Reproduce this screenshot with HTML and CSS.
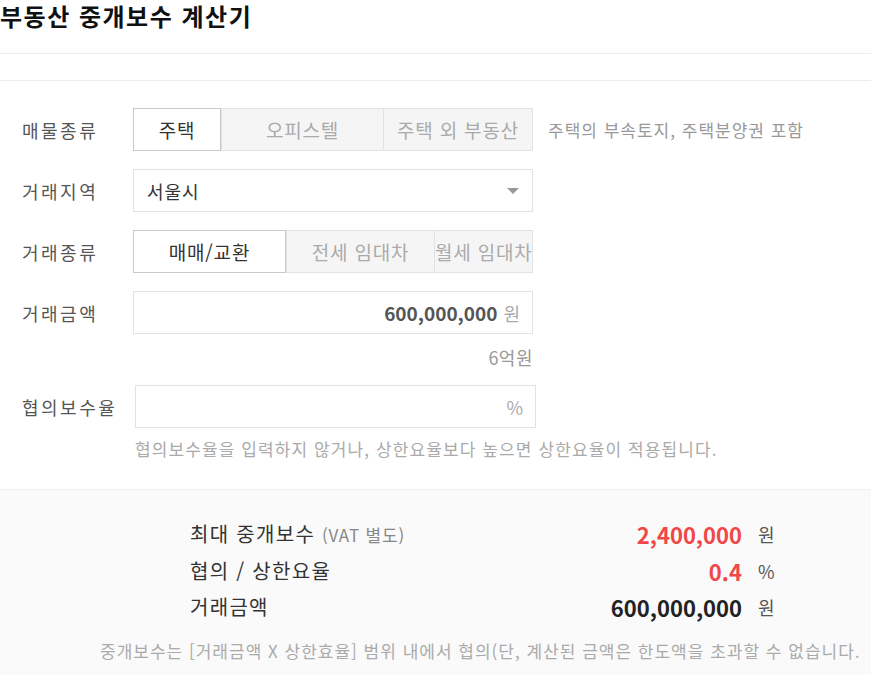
FILE: index.html
```html
<!DOCTYPE html>
<html lang="ko">
<head>
    <meta charset="UTF-8">
    <meta name="viewport" content="width=device-width, initial-scale=1.0">
    <title>부동산 중개보수 계산기</title>
    <link rel="stylesheet" href="styles.css">
</head>
<body>
    <header class="page-head">
        <h1>부동산 중개보수 계산기</h1>
    </header>
    <div class="head-gap"></div>

    <form class="calc-form">
        <div class="form-row">
            <label class="row-label">매물종류</label>
            <div class="tab-group">
                <button type="button" class="tab active tab-w1">주택</button>
                <button type="button" class="tab tab-w2">오피스텔</button>
                <button type="button" class="tab tab-w3">주택 외 부동산</button>
            </div>
            <span class="row-hint">주택의 부속토지, 주택분양권 포함</span>
        </div>

        <div class="form-row">
            <label class="row-label">거래지역</label>
            <div class="select-box">
                <span>서울시</span>
                <span class="caret"></span>
            </div>
        </div>

        <div class="form-row">
            <label class="row-label">거래종류</label>
            <div class="tab-group">
                <button type="button" class="tab active tab-w4">매매/교환</button>
                <button type="button" class="tab tab-w5">전세 임대차</button>
                <button type="button" class="tab tab-w6">월세 임대차</button>
            </div>
        </div>

        <div class="form-row">
            <label class="row-label">거래금액</label>
            <div class="text-box">
                <span class="amount">600,000,000</span>
                <span class="unit">원</span>
            </div>
        </div>
        <div class="amount-korean">6억원</div>

        <div class="form-row rate-row">
            <label class="row-label">협의보수율</label>
            <div class="text-box">
                <span class="unit">%</span>
            </div>
        </div>
        <p class="rate-hint">협의보수율을 입력하지 않거나, 상한요율보다 높으면 상한요율이 적용됩니다.</p>
    </form>

    <section class="result">
        <div class="result-grid">
            <div class="res-label">최대 중개보수 <small>(VAT 별도)</small></div>
            <div class="res-value red">2,400,000</div>
            <div class="res-unit">원</div>

            <div class="res-label">협의 / 상한요율</div>
            <div class="res-value red">0.4</div>
            <div class="res-unit">%</div>

            <div class="res-label">거래금액</div>
            <div class="res-value">600,000,000</div>
            <div class="res-unit">원</div>
        </div>
        <p class="result-note">중개보수는 [거래금액 X 상한효율] 범위 내에서 협의(단, 계산된 금액은 한도액을 초과할 수 없습니다.</p>
    </section>
</body>
</html>
```

FILE: styles.css
```css
:root {
    --line: #ececec;
    --box-line: #e2e2e2;
    --dark-text: #333;
    --mid-text: #555;
    --light-text: #aaa;
    --red: #f04848;
}

* {
    box-sizing: border-box;
}

body {
    margin: 0;
    font-family: "Noto Sans CJK KR", "Noto Sans", sans-serif;
    color: var(--dark-text);
    background: white;
}

.page-head {
    height: 54px;
    border-bottom: 1px solid var(--line);
}

.page-head h1 {
    margin: 0;
    font-size: 24px;
    line-height: 32px;
    font-weight: 700;
    letter-spacing: 1.5px;
    color: #111;
}

.head-gap {
    height: 27px;
    border-bottom: 1px solid var(--line);
}

.calc-form {
    padding: 27px 0 0 22px;
}

.form-row {
    display: flex;
    align-items: center;
    margin-bottom: 18px;
}

.row-label {
    min-width: 111px;
    font-size: 18px;
    color: var(--mid-text);
    letter-spacing: 2.5px;
}

.tab-group {
    display: flex;
    width: 400px;
    height: 43px;
    border: 1px solid var(--box-line);
    background: #f5f5f5;
}

.tab {
    font-family: inherit;
    font-size: 19px;
    letter-spacing: 0.8px;
    color: var(--light-text);
    background: none;
    border: none;
    border-left: 1px solid var(--box-line);
    padding: 0;
    white-space: nowrap;
    overflow: hidden;
}

.tab:first-child {
    border-left: none;
}

.tab.active {
    background: white;
    color: var(--dark-text);
    margin: -1px 0 -1px -1px;
    border: 1px solid #c8c8c8;
}

.tab-w1 { width: 88px; }
.tab-w2 { width: 162px; }
.tab-w3 { flex: 1; }
.tab-w4 { width: 153px; }
.tab-w5 { width: 148px; }
.tab-w6 { flex: 1; }

.row-hint {
    margin-left: 15px;
    font-size: 17px;
    letter-spacing: 1px;
    color: #999;
}

.select-box {
    display: flex;
    align-items: center;
    justify-content: space-between;
    width: 400px;
    height: 43px;
    padding: 0 13px;
    border: 1px solid var(--box-line);
    font-size: 18px;
    letter-spacing: 1px;
    color: var(--dark-text);
}

.caret {
    width: 0;
    height: 0;
    border-left: 6px solid transparent;
    border-right: 6px solid transparent;
    border-top: 6px solid #999;
}

.text-box {
    display: flex;
    align-items: center;
    justify-content: flex-end;
    gap: 6px;
    width: 400px;
    height: 43px;
    padding: 0 12px;
    border: 1px solid var(--box-line);
}

.amount {
    font-size: 19px;
    font-weight: 700;
    color: var(--mid-text);
}

.unit {
    font-size: 18px;
    color: var(--light-text);
}

.amount-korean {
    width: 511px;
    margin-top: -10px;
    text-align: right;
    font-size: 18px;
    letter-spacing: 0.5px;
    color: #999;
    line-height: 30px;
}

.rate-row {
    margin-top: 13px;
    margin-bottom: 0;
}

.rate-row .row-label {
    min-width: 113px;
}

.rate-row .text-box {
    width: 401px;
}

.rate-hint {
    margin: 8px 0 0 113px;
    font-size: 17px;
    color: var(--light-text);
    letter-spacing: 1.1px;
    white-space: nowrap;
}

.result {
    margin-top: 28px;
    border-top: 1px solid #f0f0f0;
    background: #fafafa;
    padding: 26px 0 30px;
}

.result-grid {
    display: grid;
    grid-template-columns: 1fr auto 30px;
    width: 582px;
    margin-left: 190px;
    row-gap: 1px;
    align-items: center;
}

.res-label {
    font-size: 20px;
    letter-spacing: 1.3px;
    color: var(--dark-text);
    line-height: 35px;
}

.res-label small {
    font-size: 17px;
    letter-spacing: 0.8px;
    color: #888;
}

.res-value {
    font-size: 22px;
    font-weight: 700;
    text-align: right;
    color: #222;
}

.res-value.red {
    color: var(--red);
}

.res-unit {
    font-size: 18px;
    color: var(--mid-text);
    padding-left: 16px;
}

.result-note {
    margin: 14px 0 0 100px;
    font-size: 17px;
    letter-spacing: 1px;
    color: var(--light-text);
    white-space: nowrap;
}
```
